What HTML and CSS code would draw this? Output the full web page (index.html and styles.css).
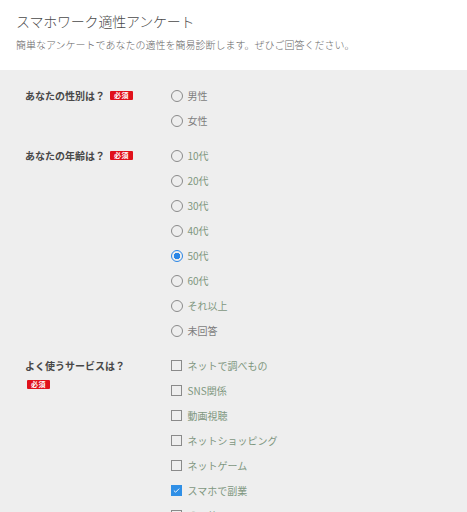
FILE: index.html
```html
<!DOCTYPE html>
<html lang="ja">
<head>
<meta charset="utf-8">
<title>スマホワーク適性アンケート</title>
<link rel="stylesheet" href="styles.css">
</head>
<body>
<header class="header">
  <h1 class="title">スマホワーク適性アンケート</h1>
  <p class="lead">簡単なアンケートであなたの適性を簡易診断します。ぜひご回答ください。</p>
</header>
<main class="form">
  <section class="question">
    <div class="label">あなたの性別は？<span class="badge">必須</span></div>
    <div class="options">
      <label class="option neutral"><input type="radio" name="sex" class="radio"><span>男性</span></label>
      <label class="option neutral"><input type="radio" name="sex" class="radio"><span>女性</span></label>
    </div>
  </section>
  <section class="question">
    <div class="label">あなたの年齢は？<span class="badge">必須</span></div>
    <div class="options">
      <label class="option"><input type="radio" name="age" class="radio"><span>10代</span></label>
      <label class="option"><input type="radio" name="age" class="radio"><span>20代</span></label>
      <label class="option"><input type="radio" name="age" class="radio"><span>30代</span></label>
      <label class="option"><input type="radio" name="age" class="radio"><span>40代</span></label>
      <label class="option"><input type="radio" name="age" class="radio" checked><span>50代</span></label>
      <label class="option"><input type="radio" name="age" class="radio"><span>60代</span></label>
      <label class="option"><input type="radio" name="age" class="radio"><span>それ以上</span></label>
      <label class="option neutral"><input type="radio" name="age" class="radio"><span>未回答</span></label>
    </div>
  </section>
  <section class="question q-last">
    <div class="label">よく使うサービスは？<span class="badge badge-block">必須</span></div>
    <div class="options">
      <label class="option"><input type="checkbox" class="check"><span>ネットで調べもの</span></label>
      <label class="option"><input type="checkbox" class="check"><span>SNS関係</span></label>
      <label class="option"><input type="checkbox" class="check"><span>動画視聴</span></label>
      <label class="option"><input type="checkbox" class="check"><span>ネットショッピング</span></label>
      <label class="option"><input type="checkbox" class="check"><span>ネットゲーム</span></label>
      <label class="option"><input type="checkbox" class="check" checked><span>スマホで副業</span></label>
      <label class="option"><input type="checkbox" class="check"><span>その他</span></label>
    </div>
  </section>
</main>
</body>
</html>
```
FILE: styles.css
```css
html, body {
  margin: 0;
  padding: 0;
  background: #eeeeee;
  font-family: "Noto Sans CJK JP", "Noto Sans", sans-serif;
}

.header {
  background: #ffffff;
  padding: 11px 16px 18px;
  height: 41px;
}

.title {
  margin: 0;
  font-size: 14px;
  line-height: 21px;
  font-weight: 300;
  color: #4a4a4a;
  letter-spacing: -0.2px;
}

.lead {
  margin: 6px 0 0;
  font-size: 10px;
  line-height: 14px;
  font-weight: 300;
  color: #666666;
}

.form {
  padding: 13px 0 0 25px;
}

.question {
  display: grid;
  grid-template-columns: 145px 1fr;
  margin-bottom: 10px;
}

.question + .question.q-last {
  margin-top: 1px;
}

.label {
  font-size: 10px;
  font-weight: bold;
  line-height: 25px;
  color: #484848;
}

.badge {
  display: inline-block;
  margin-left: 5px;
  background: #e0111b;
  color: #ffffff;
  font-size: 7px;
  font-weight: bold;
  line-height: 9px;
  height: 9px;
  padding: 0 4px;
  border-radius: 1px;
  vertical-align: 2px;
  letter-spacing: 0.5px;
}

.badge-block {
  display: block;
  width: 15px;
  margin: 2px 0 0 2px;
}

.options {
  display: flex;
  flex-direction: column;
}

.option {
  display: flex;
  align-items: center;
  height: 25px;
  font-size: 10px;
  color: #7f977f;
}

.option.neutral {
  color: #7d7d7d;
}

.radio, .check {
  appearance: none;
  -webkit-appearance: none;
  margin: 0 5px 0 1px;
  width: 11px;
  height: 11px;
  border: 1px solid #8a8a8a;
  background: transparent;
  box-sizing: border-box;
  flex: none;
}

.radio {
  border-radius: 50%;
  width: 12px;
  height: 12px;
  margin-left: 0.5px;
}

.radio:checked {
  border-color: #2a86e6;
  background: radial-gradient(circle, #2a86e6 0 3px, transparent 3.5px);
}

.check {
  margin: 0 6px 0 0.5px;
}

.check:checked {
  border-color: #2f8fe6;
  background-color: #2f8fe6;
  background-image: url("data:image/svg+xml;utf8,<svg xmlns='http://www.w3.org/2000/svg' viewBox='0 0 11 11'><path d='M2.3 5.6 L4.4 7.6 L8.8 3.2' fill='none' stroke='white' stroke-width='1.1'/></svg>");
  background-size: 100% 100%;
}
```
